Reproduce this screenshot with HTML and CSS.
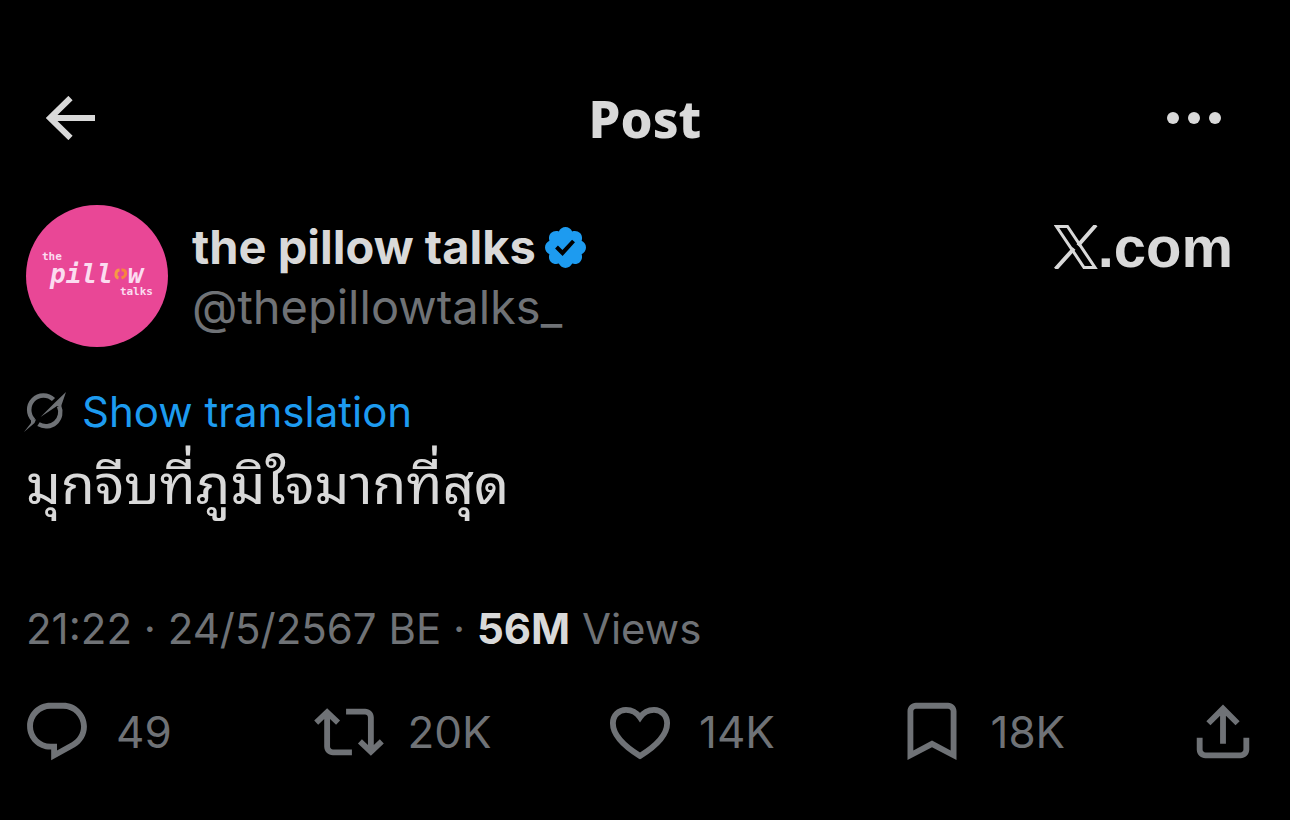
FILE: index.html
```html
<!DOCTYPE html>
<html lang="en">
<head>
<meta charset="utf-8">
<meta name="viewport" content="width=device-width, initial-scale=1">
<title>Post</title>
<link rel="stylesheet" href="styles.css">
</head>
<body>
<header class="topbar">
  <button class="icon-btn" type="button" aria-label="Back">
    <svg class="back" viewBox="0 0 50 44"><path d="M24.500 2 4 22l20.500 20M5 22h44" fill="none" stroke="currentColor" stroke-width="6"/></svg>
  </button>
  <h1 class="title">Post</h1>
  <button class="icon-btn" type="button" aria-label="More">
    <svg class="more" viewBox="0 0 54 12"><circle cx="6" cy="6" r="6"/><circle cx="27" cy="6" r="6"/><circle cx="48" cy="6" r="6"/></svg>
  </button>
</header>
<main class="post">
  <div class="author">
    <div class="avatar" aria-hidden="true">
      <span class="logo-the">the</span>
      <span class="logo-pillow">pill<svg class="logo-o" viewBox="0 0 14 12"><path d="M6 2C2 2 1 9 5 10" fill="none" stroke="#f59a45" stroke-width="3"/><path d="M8 2c5-1 6 6 0 8" fill="none" stroke="#f6853f" stroke-width="3"/></svg>w</span>
      <span class="logo-talks">talks</span>
    </div>
    <div class="names">
      <div class="name-row">
        <a class="name" href="#">the pillow talks</a>
        <svg class="badge" viewBox="1.750 1.750 20.500 20.500" role="img" aria-label="Verified"><path d="M22.250 12c0-1.430-.88-2.670-2.190-3.340.46-1.390.2-2.900-.81-3.910s-2.520-1.270-3.910-.81c-.66-1.310-1.910-2.190-3.340-2.190s-2.670.88-3.330 2.190c-1.400-.46-2.910-.2-3.920.81s-1.260 2.520-.8 3.910c-1.310.67-2.200 1.910-2.200 3.340s.89 2.670 2.200 3.340c-.46 1.390-.21 2.900.8 3.910s2.520 1.260 3.910.81c.67 1.310 1.910 2.190 3.340 2.190s2.680-.88 3.340-2.190c1.390.45 2.900.2 3.910-.81s1.270-2.520.81-3.910c1.310-.67 2.190-1.910 2.190-3.340zm-11.710 4.200L6.800 12.460l1.410-1.420 2.260 2.260 4.800-5.230 1.470 1.360-6.200 6.770z"/></svg>
      </div>
      <a class="handle" href="#">@thepillowtalks_</a>
    </div>
    <div class="site">
      <svg class="x-logo" viewBox="0 0 44 44" role="img" aria-label="X"><path d="M2.500 1.500H13.500L41 42.500H30Z" fill="none" stroke="currentColor" stroke-width="3"/><path d="M42 0 24 20.500M1.500 44 20 23.500" fill="none" stroke="currentColor" stroke-width="4"/></svg><span>.com</span>
    </div>
  </div>
  <button class="translate" type="button">
    <svg class="grok" viewBox="0 0 42 40" aria-hidden="true"><path d="M29.500 7.500A14.300 14.300 0 0 0 9.500 28M14.500 32.200A14.300 14.300 0 0 0 35 14" fill="none" stroke="currentColor" stroke-width="4.500"/><path d="M16.500 25 31 10.500 42 0 37 14.500 33 14ZM7 26.500 12 27.500 10.500 31 0 40 7 31Z"/></svg>
    <span>Show translation</span>
  </button>
  <p class="text" lang="th">มุกจีบที่ภูมิใจมากที่สุด</p>
  <p class="meta">21:22 · 24/5/2567 BE · <strong>56M</strong> Views</p>
  <div class="actions">
    <button class="action" type="button" aria-label="Reply, 49">
      <svg viewBox="0 0 24 24"><path d="M1.751 10c0-4.420 3.584-8 8.005-8h4.366c4.490 0 8.129 3.640 8.129 8.130 0 2.960-1.607 5.680-4.196 7.110l-8.054 4.460v-3.690h-.067c-4.490.1-8.183-3.510-8.183-8.010zm8.005-6c-3.317 0-6.005 2.690-6.005 6 0 3.370 2.770 6.080 6.138 6.010l.351-.01h1.761v2.300l5.087-2.810c1.951-1.080 3.163-3.130 3.163-5.360 0-3.390-2.744-6.130-6.129-6.130H9.756z"/></svg>
      <span>49</span>
    </button>
    <button class="action" type="button" aria-label="Repost, 20K">
      <svg viewBox="0 0 24 24"><path d="M4.500 3.880l4.432 4.140-1.364 1.460L5.500 7.550V17c0 .55.45 1 1 1H13v2H6.500c-1.660 0-3-1.340-3-3V7.550L1.432 9.480.068 8.020 4.500 3.880zM17.500 6H11V4h6.500c1.660 0 3 1.340 3 3v9.450l2.068-1.930 1.364 1.460-4.432 4.140-4.432-4.140 1.364-1.460 2.068 1.930V7c0-.55-.45-1-1-1z"/></svg>
      <span>20K</span>
    </button>
    <button class="action" type="button" aria-label="Like, 14K">
      <svg viewBox="0 0 24 24"><path d="M12 20.200C5.500 16.200 2.700 12.400 2.700 9 2.700 6.300 4.700 4.400 7.200 4.400 9.300 4.400 10.900 5.400 12 7 13.100 5.400 14.700 4.400 16.800 4.400 19.300 4.400 21.300 6.300 21.300 9 21.300 12.400 18.500 16.200 12 20.200Z" fill="none" stroke="currentColor" stroke-width="2"/></svg>
      <span>14K</span>
    </button>
    <button class="action" type="button" aria-label="Bookmark, 18K">
      <svg viewBox="0 0 24 24"><path d="M3.600 4.900C3.600 3.300 4.900 2 6.500 2h11c1.600 0 2.900 1.300 2.900 2.900v16.700L12 17.200l-8.400 4.400zM6.500 4c-.5 0-.9.4-.9.9v13.400l6.400-3.400 6.400 3.400V4.900c0-.5-.4-.9-.9-.9z"/></svg>
      <span>18K</span>
    </button>
    <button class="action" type="button" aria-label="Share">
      <svg viewBox="0 0 24 24"><path d="M12 2.590l5.700 5.700-1.410 1.420L13 6.410V16h-2V6.410l-3.300 3.300-1.410-1.420L12 2.590zM21 14v4c0 1.660-1.340 3-3 3H6c-1.660 0-3-1.340-3-3v-4h2v4c0 .55.45 1 1 1h12c.55 0 1-.45 1-1v-4h2z"/></svg>
    </button>
  </div>
</main>
</body>
</html>
```
FILE: styles.css
```css
* {
  box-sizing: border-box;
}

body {
  margin: 0;
  min-height: 100vh;
  background: #000;
  color: #d9d9d9;
  font-family: Inter, sans-serif;
}

button {
  padding: 0;
  border: 0;
  background: none;
  color: inherit;
  font: inherit;
  cursor: pointer;
}

a {
  color: inherit;
  text-decoration: none;
}

svg {
  display: block;
  flex: none;
  fill: currentColor;
}

.topbar {
  display: grid;
  grid-template-columns: 1fr auto 1fr;
  align-items: center;
  padding: 88px 69px 0 46px;
}

.icon-btn:last-child {
  justify-self: end;
}

.icon-btn:first-child {
  justify-self: start;
}

.back {
  width: 50px;
  height: 44px;
}

.more {
  width: 54px;
  height: 12px;
}

.title {
  margin: 0 0 0 23px;
  font-family: "Noto Sans", sans-serif;
  font-size: 51px;
  font-weight: 800;
  line-height: 60px;
}

.post {
  padding: 57px 26px 0;
}

.author {
  display: flex;
  align-items: flex-start;
}

.avatar {
  display: flex;
  flex: none;
  flex-direction: column;
  width: 142px;
  height: 142px;
  padding: 46px 15px 0 16px;
  border-radius: 50%;
  background: #e94796;
  color: #fbdcf0;
  font-family: "DejaVu Sans Mono", monospace;
  font-weight: 700;
}

.logo-the,
.logo-talks {
  font-size: 11px;
  line-height: 11px;
}

.logo-pillow {
  display: flex;
  align-items: center;
  margin-left: 8px;
  font-size: 26px;
  font-style: italic;
  line-height: 24px;
}

.logo-o {
  width: 15px;
  height: 12px;
}

.logo-talks {
  align-self: flex-end;
}

.names {
  display: flex;
  flex-direction: column;
  flex: 1;
  padding: 12px 0 0 24px;
}

.name-row {
  display: flex;
  align-items: center;
  gap: 9px;
}

.name {
  font-size: 47px;
  font-weight: 700;
  line-height: 60px;
}

.badge {
  width: 41px;
  height: 41px;
  color: #1d9bf0;
}

.handle {
  color: #6f7276;
  font-size: 47px;
  line-height: 60px;
}

.site {
  display: flex;
  align-items: center;
  padding: 12px 31px 0 0;
  font-family: "Liberation Sans", Arial, sans-serif;
  font-size: 58px;
  font-weight: 700;
  line-height: 60px;
}

.x-logo {
  width: 44px;
  height: 44px;
}

.translate {
  display: flex;
  align-items: center;
  gap: 16px;
  margin: 35px 0 0 -2px;
  color: #1d9bf0;
  font-size: 42px;
  line-height: 60px;
}

.grok {
  width: 42px;
  height: 40px;
  color: #6f7276;
}

.text {
  margin: 0;
  font-family: "Noto Sans Thai Looped", "Noto Looped Thai", Loma, Garuda, Waree, "Noto Sans Thai", sans-serif;
  font-size: 55px;
  line-height: 74px;
}

.meta {
  margin: 83px 0 0;
  color: #6f7276;
  font-size: 42px;
  line-height: 60px;
}

.meta strong {
  color: #d9d9d9;
}

.actions {
  display: grid;
  grid-template-columns: repeat(4, 1fr) auto;
  margin: 38px 6px 0 -4px;
}

.action {
  display: flex;
  align-items: center;
  gap: 24px;
  color: #6f7276;
  font-size: 44px;
  line-height: 60px;
}

.action svg {
  width: 70px;
  height: 70px;
}
```
